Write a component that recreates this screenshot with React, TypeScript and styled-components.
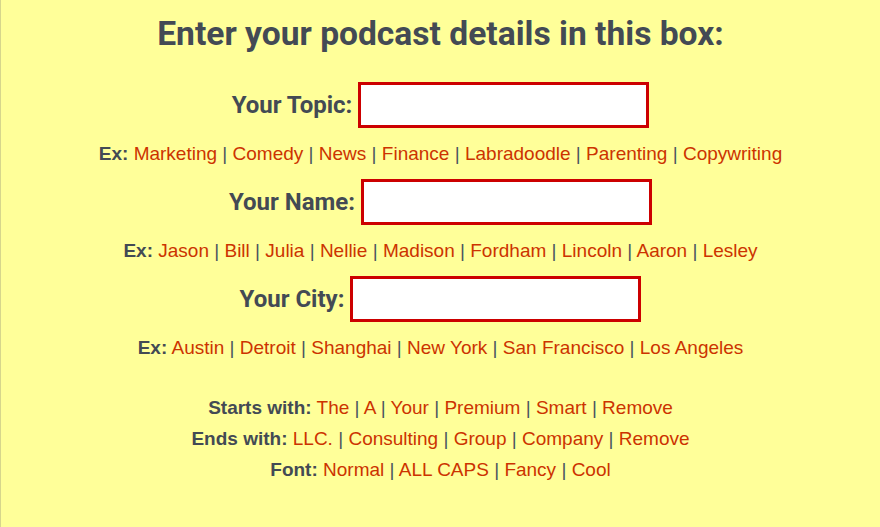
import React from "react";
import styled, { createGlobalStyle } from "styled-components";

const GlobalStyle = createGlobalStyle`
  html, body {
    margin: 0;
    padding: 0;
    background: #ffff99;
  }
`;

const fields = [
  {
    label: "Your Topic:",
    examples: [
      "Marketing",
      "Comedy",
      "News",
      "Finance",
      "Labradoodle",
      "Parenting",
      "Copywriting",
    ],
  },
  {
    label: "Your Name:",
    examples: [
      "Jason",
      "Bill",
      "Julia",
      "Nellie",
      "Madison",
      "Fordham",
      "Lincoln",
      "Aaron",
      "Lesley",
    ],
  },
  {
    label: "Your City:",
    examples: [
      "Austin",
      "Detroit",
      "Shanghai",
      "New York",
      "San Francisco",
      "Los Angeles",
    ],
  },
];

const options = [
  { label: "Starts with:", items: ["The", "A", "Your", "Premium", "Smart", "Remove"] },
  {
    label: "Ends with:",
    items: ["LLC.", "Consulting", "Group", "Company", "Remove"],
  },
  { label: "Font:", items: ["Normal", "ALL CAPS", "Fancy", "Cool"] },
];

export default function App() {
  return (
    <>
      <GlobalStyle />
      <Page>
        <Title>Enter your podcast details in this box:</Title>
        {fields.map((f) => (
          <Field key={f.label}>
            <FieldRow>
              <Label>{f.label}</Label>
              <Input type="text" />
            </FieldRow>
            <ChoiceLine>
              <Prefix>Ex:</Prefix> <Choices items={f.examples} />
            </ChoiceLine>
          </Field>
        ))}
        <Options>
          {options.map((o) => (
            <ChoiceLine key={o.label} $compact>
              <Prefix>{o.label}</Prefix> <Choices items={o.items} />
            </ChoiceLine>
          ))}
        </Options>
      </Page>
    </>
  );
}

function Choices({ items }: { items: string[] }) {
  return (
    <>
      {items.map((item, i) => (
        <React.Fragment key={item + i}>
          {i > 0 && <Sep> | </Sep>}
          <ChoiceLink href="#">{item}</ChoiceLink>
        </React.Fragment>
      ))}
    </>
  );
}

const Page = styled.div`
  min-height: 527px;
  box-sizing: border-box;
  border-left: 1px solid #d6d68c;
  padding-top: 14px;
  text-align: center;
  color: #434a54;
`;

const Title = styled.h1`
  margin: 0 0 28px;
  font-family: Roboto, "Liberation Sans", sans-serif;
  font-weight: 700;
  font-size: 33.6px;
  line-height: 40px;
`;

const Field = styled.div`
  display: flex;
  flex-direction: column;
  align-items: center;
  margin-bottom: 13px;
`;

const FieldRow = styled.div`
  display: flex;
  align-items: center;
  justify-content: center;
  gap: 6px;
`;

const Label = styled.label`
  font-family: Roboto, "Liberation Sans", sans-serif;
  font-weight: 700;
  font-size: 24px;
`;

const Input = styled.input`
  box-sizing: border-box;
  width: 291px;
  height: 46px;
  border: 3px solid #cc0000;
  background: #fff;
  outline: none;
  padding: 0 8px;
`;

const ChoiceLine = styled.p<{ $compact?: boolean }>`
  margin: ${({ $compact }) => ($compact ? "0" : "14px 0 0")};
  font-family: "Liberation Sans", Arial, sans-serif;
  font-size: 19px;
  line-height: ${({ $compact }) => ($compact ? "31px" : "24px")};
`;

const Prefix = styled.b`
  font-weight: 700;
  color: #434a54;
`;

const ChoiceLink = styled.a`
  color: #cc3300;
  text-decoration: none;
`;

const Sep = styled.span`
  color: #4a5560;
`;

const Options = styled.div`
  margin-top: 32px;
`;
